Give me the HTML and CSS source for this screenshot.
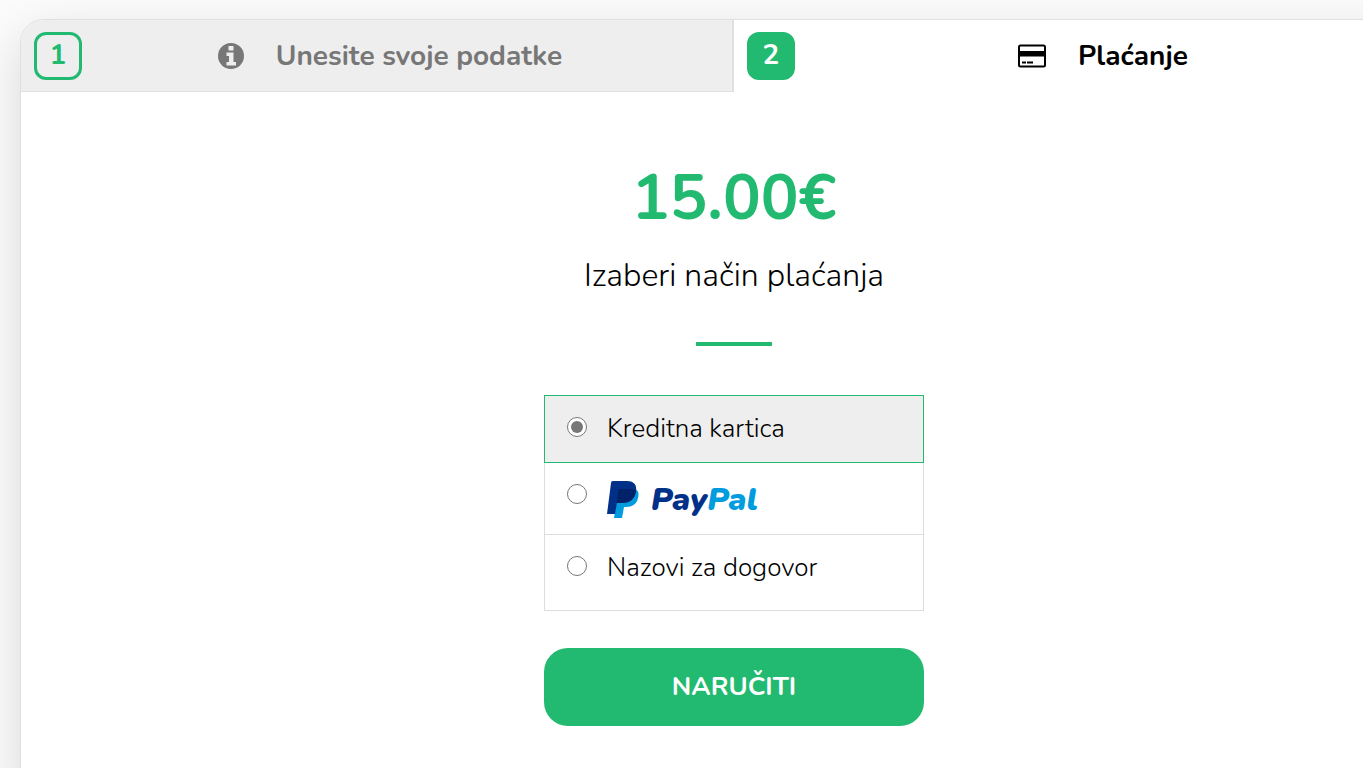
FILE: index.html
```html
<!DOCTYPE html>
<html lang="hr">
<head>
  <meta charset="UTF-8">
  <meta name="viewport" content="width=device-width, initial-scale=1.0">
  <title>Plaćanje</title>
  <link rel="stylesheet" href="styles.css">
</head>
<body>
  <main class="wizard">
    <ol class="steps">
      <li class="step">
        <span class="step-number">1</span>
        <div class="step-label">
          <svg class="icon-info" viewBox="0 0 26 26" aria-hidden="true">
            <circle cx="13" cy="13" r="13" fill="#777"/>
            <path fill="#eee" d="M10.500 3h5v4.500h-5zM8.500 9.500h7v9.500h2.500v3.500H8.500V19h2.500v-6H8.500z"/>
          </svg>
          <span>Unesite svoje podatke</span>
        </div>
      </li>
      <li class="step active">
        <span class="step-number">2</span>
        <div class="step-label">
          <svg class="icon-card" viewBox="0 0 28 24" aria-hidden="true">
            <rect x="1" y="1.500" width="26" height="21" rx="1.500" fill="#fff" stroke="#000" stroke-width="2"/>
            <path d="M1 7h26v5.500H1zM4 17.500h4v2H4zM9 17.500h6v2H9z"/>
          </svg>
          <span>Plaćanje</span>
        </div>
      </li>
    </ol>

    <form class="payment">
      <h1 class="price">15.00€</h1>
      <p class="subtitle">Izaberi način plaćanja</p>
      <div class="divider"></div>

      <div class="methods">
        <label class="method selected">
          <input type="radio" name="method" value="card" checked>
          <span>Kreditna kartica</span>
        </label>
        <label class="method">
          <input type="radio" name="method" value="paypal">
          <span class="paypal">
            <svg class="paypal-mark" viewBox="0 0 32 37" aria-hidden="true">
              <path fill="#009cde" d="M28 8c4 2 4 5 3 9-1 6-6 9-12 9h-2l-2 11H7l4-24z"/>
              <path fill="#003087" d="M6 0h14c7 0 10 4 9 10-1 8-6 12-14 12H10L8 33H0L4 2q0-2 2-2z"/>
              <path fill="#012169" d="M13 8h12q3 0 4 2c-1 8-6 12-14 12h-5l1-12q0-2 2-2z"/>
            </svg>
            <span class="paypal-text">Pay<span class="paypal-light">Pal</span></span>
          </span>
        </label>
        <label class="method">
          <input type="radio" name="method" value="call">
          <span>Nazovi za dogovor</span>
        </label>
      </div>

      <button type="submit" class="order">NARUČITI</button>
    </form>
  </main>
</body>
</html>
```
FILE: styles.css
```css
* {
  box-sizing: border-box;
}
body {
  margin: 0;
  background: #fbfbfb;
  color: #000;
  font-family: Nunito, "Open Sans", sans-serif;
  font-size: 26px;
  overflow-x: hidden;
}
/* the card runs past the right edge of the window */
.wizard {
  margin: 19px -85px 0 20px;
  min-height: 100vh;
  background: #fff;
  border: 1px solid #e0e0e0;
  border-radius: 24px;
  box-shadow: 0 16px 48px rgba(0, 0, 0, 0.14);
  overflow: hidden;
}
.steps {
  display: grid;
  grid-template-columns: 1fr 1fr;
  margin: 0;
  padding: 0;
  list-style: none;
}
.step {
  display: flex;
  align-items: center;
  height: 72px;
  padding: 0 34px 0 13px;
  background: #eee;
  border-right: 2px solid #e0e0e0;
  border-bottom: 1px solid #e0e0e0;
  color: #777;
  font-size: 28px;
  font-weight: 700;
}
.step-number {
  width: 48px;
  height: 48px;
  border: 3px solid #22ba70;
  border-radius: 12px;
  color: #22ba70;
  line-height: 40px;
  text-align: center;
}
.step-label {
  display: flex;
  flex: 1;
  align-items: center;
  justify-content: center;
  gap: 32px;
}
.step.active {
  background: #fff;
  border-color: #fff;
  color: #000;
}
.active .step-number {
  background: #22ba70;
  color: #fff;
}
.icon-info {
  width: 26px;
  height: 26px;
}
.icon-card {
  width: 28px;
  height: 24px;
}
.payment {
  width: 380px;
  margin: 0 auto;
  padding: 64px 0;
  text-align: center;
}
.price {
  margin: 0;
  color: #22ba70;
  font-size: 63px;
  font-weight: 700;
  line-height: 84px;
}
.subtitle {
  margin: 14px 0 44px;
  font-size: 32px;
  font-weight: 300;
  line-height: 44px;
}
.divider {
  width: 76px;
  height: 4px;
  margin: 0 auto 49px;
  background: #22ba70;
}
.methods {
  border: 1px solid #ddd;
  text-align: left;
}
.method {
  display: flex;
  align-items: flex-start;
  gap: 20px;
  height: 72px;
  padding: 15px 22px;
  border-bottom: 1px solid #ddd;
  font-weight: 300;
  line-height: 36px;
}
.method:last-child {
  height: 75px;
  border-bottom: none;
}
.method.selected {
  height: 68px;
  margin: -1px -1px 0;
  background: #eee;
  border: 1px solid #22ba70;
}
.method input {
  flex: none;
  width: 20px;
  height: 20px;
  margin: 6px 0 0;
  accent-color: #777;
}
.paypal {
  display: flex;
  align-items: center;
  gap: 12px;
  margin-top: 3px;
}
.paypal-mark {
  width: 32px;
  height: 37px;
}
.paypal-text {
  color: #003087;
  font-size: 32px;
  font-style: italic;
  font-weight: 900;
}
.paypal-light {
  color: #009cde;
}
.order {
  width: 100%;
  height: 78px;
  margin-top: 37px;
  padding-bottom: 2px;
  background: #22ba70;
  border: none;
  border-radius: 24px;
  color: #fff;
  font: inherit;
  font-weight: 700;
  cursor: pointer;
}
```
